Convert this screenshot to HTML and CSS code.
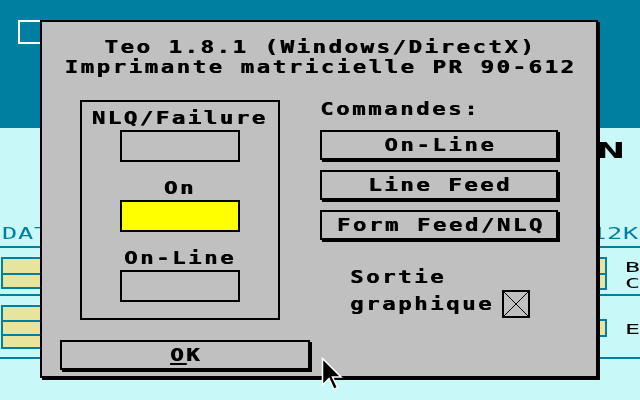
FILE: index.html
```html
<!DOCTYPE html>
<html lang="fr">
<head>
<meta charset="utf-8">
<title>Teo - Imprimante</title>
<link rel="stylesheet" href="styles.css">
</head>
<body>
<div class="screen">
  <header class="topbar"><span class="winbox"></span></header>
  <main class="desk">
    <div class="band band-title"><span class="big">ON</span></div>
    <div class="band band-labels">
      <span class="lbl-l"><span class="thin teal">DAT</span></span>
      <span class="lbl-r"><span class="thin teal">512K</span></span>
    </div>
    <div class="rule"></div>
    <div class="band band-g1">
      <div class="cells cells-l"><i></i><i></i></div>
      <div class="side">
        <div class="cells cells-r"><i></i><i></i></div>
        <div class="letters"><span class="thin small">B</span><span class="thin small">C</span></div>
      </div>
    </div>
    <div class="rule rule-2"></div>
    <div class="band band-g2">
      <div class="cells cells-l"><i class="s"></i><i></i><i class="s"></i></div>
      <div class="side side-2">
        <div class="cells cells-r"><i></i></div>
        <div class="letters"><span class="thin small">E</span></div>
      </div>
    </div>
    <div class="rule rule-3"></div>
  </main>

  <section class="dialog">
    <div class="title">
      <div><span class="px">Teo 1.8.1 (Windows/DirectX)</span></div>
      <div><span class="px">Imprimante matricielle PR 90-612</span></div>
    </div>
    <div class="body">
      <div class="leds">
        <div class="led"><span class="px">NLQ/Failure</span><div class="lamp"></div></div>
        <div class="led"><span class="px">On</span><div class="lamp lamp-on"></div></div>
        <div class="led"><span class="px">On-Line</span><div class="lamp"></div></div>
      </div>
      <div class="cmds">
        <div class="heading"><span class="px pl">Commandes:</span></div>
        <button class="btn"><span class="px">On-Line</span></button>
        <button class="btn"><span class="px">Line Feed</span></button>
        <button class="btn"><span class="px">Form Feed/NLQ</span></button>
        <div class="output">
          <span class="out-1"><span class="px pl">Sortie</span></span>
          <span class="out-2"><span class="px pl">graphique</span></span>
          <span class="check">
            <svg width="28" height="28" viewBox="0 0 28 28" shape-rendering="crispEdges">
              <rect x="1" y="1" width="26" height="26" fill="none" stroke="#000" stroke-width="2"/>
              <line x1="2" y1="2" x2="26" y2="26" stroke="#000" stroke-width="1"/>
              <line x1="26" y1="2" x2="2" y2="26" stroke="#000" stroke-width="1"/>
            </svg>
          </span>
        </div>
      </div>
    </div>
    <button class="btn btn-ok"><span class="px"><u>O</u>K</span></button>
  </section>

  <svg class="cursor" width="24" height="36" viewBox="0 0 24 36">
    <polygon points="1.5,1.5 1.5,28 8,21.5 13,32.5 16.5,30.5 11.5,20 20,20" fill="#000" stroke="#fff" stroke-width="1.5" stroke-linejoin="miter"/>
  </svg>
</div>
</body>
</html>
```

FILE: styles.css
```css
* { box-sizing: border-box; }

html, body {
  margin: 0;
  padding: 0;
}

body {
  width: 640px;
  height: 400px;
  overflow: hidden;
  background: #c8f8f8;
  font-family: "DejaVu Sans Mono", "Liberation Mono", monospace;
  color: #000;
}

.screen {
  position: relative;
  width: 640px;
  height: 400px;
  overflow: hidden;
}

/* ---------- background application ---------- */
.topbar {
  height: 128px;
  background: #007fa0;
  padding: 20px 0 0 18px;
}

.winbox {
  display: block;
  width: 26px;
  height: 24px;
  border: 2px solid #fff;
}

.band {
  display: flex;
  justify-content: space-between;
  align-items: flex-start;
}

.band-title {
  margin-top: 12px;
  height: 22px;
  justify-content: flex-end;
}

.big {
  display: inline-block;
  font: bold 22px/22px "DejaVu Sans", sans-serif;
  transform: scaleX(1.6);
  transform-origin: right center;
  margin-right: 15px;
}

.band-labels {
  margin-top: 62px;
  height: 16px;
}

.thin {
  display: inline-block;
  font: 16px/16px "DejaVu Sans Mono", monospace;
  letter-spacing: 0.5px;
  transform: scaleX(1.58);
  transform-origin: left center;
  white-space: pre;
}

.thin.small {
  font-size: 13.5px;
  line-height: 16px;
  height: 16px;
  letter-spacing: 0;
  transform: scale(1.85, 1.1);
}

.teal { color: #007fa0; }

.lbl-l { padding-left: 2px; }

.lbl-r { width: 65px; }

.rule {
  height: 2px;
  background: #007fa0;
  margin-top: 6px;
}

.rule-2 { margin-top: 3px; }
.rule-3 { margin-top: 4px; }

.band-g1 { margin-top: 9px; height: 34px; }
.band-g2 { margin-top: 9px; height: 48px; }

.cells {
  display: flex;
  flex-direction: column;
  border: 2px solid #007fa0;
  background: #e8e49c;
}

.cells i {
  display: block;
  height: 14px;
}

.cells i.s { height: 13px; }

.cells i + i { border-top: 2px solid #007fa0; }

.cells-l {
  width: 50px;
  margin-left: 1px;
}

.side {
  width: 60px;
  display: flex;
  gap: 18px;
}

.side-2 { margin-top: 14px; }

.cells-r { width: 27px; }

.letters {
  display: flex;
  flex-direction: column;
  margin-top: 1px;
}

/* ---------- dialog ---------- */
.dialog {
  position: absolute;
  left: 40px;
  top: 20px;
  width: 558px;
  height: 358px;
  border: 2px solid #000;
  box-shadow: 2px 2px 0 #000;
  background: #c0c0c0;
  padding-top: 15px;
}

.px {
  display: inline-block;
  font: bold 18px/20px "DejaVu Sans Mono", monospace;
  letter-spacing: 2px;
  transform: scaleX(1.246);
  white-space: pre;
  text-shadow: 0.5px 0 0 currentColor;
}

.px.pl { transform-origin: left center; }

.title {
  text-align: center;
  padding-left: 2px;
  line-height: 20px;
}

.title > div { height: 20px; }

.body {
  display: grid;
  grid-template-columns: 200px 238px;
  column-gap: 40px;
  align-items: start;
  margin: 23px 0 0 38px;
}

.leds {
  height: 220px;
  border: 2px solid #000;
  padding-top: 6px;
  display: flex;
  flex-direction: column;
  align-items: center;
  gap: 16px;
}

.led {
  display: flex;
  flex-direction: column;
  align-items: center;
  gap: 2px;
}

.led .px { height: 20px; }

.lamp {
  width: 120px;
  height: 32px;
  border: 2px solid #000;
}

.lamp-on { background: #ffff00; }

.cmds {
  display: flex;
  flex-direction: column;
  margin-top: -1px;
}

.heading {
  height: 20px;
  margin-bottom: 11px;
}

.btn {
  display: block;
  width: 238px;
  height: 30px;
  margin: 0 0 10px 0;
  padding: 0;
  border: 2px solid #000;
  box-shadow: 2px 2px 0 #000;
  background: #c0c0c0;
  color: #000;
  font: inherit;
  text-align: center;
  line-height: 20px;
}

.btn .px { padding-left: 2px; }

.output {
  margin-top: 17px;
  padding-left: 30px;
  display: grid;
  grid-template-columns: 152px 28px;
  grid-template-rows: 23px 28px;
}

.out-1 { grid-column: 1; grid-row: 1; }

.out-2 {
  grid-column: 1;
  grid-row: 2;
  align-self: center;
  height: 20px;
}

.check {
  grid-column: 2;
  grid-row: 2;
  display: block;
  width: 28px;
  height: 28px;
}

.check svg { display: block; }

.btn-ok {
  width: 250px;
  margin: 20px 0 0 18px;
}

.btn-ok u {
  text-decoration: underline;
  text-decoration-thickness: 2px;
  text-underline-offset: 2px;
}

.cursor {
  position: absolute;
  left: 321px;
  top: 357px;
}
```
